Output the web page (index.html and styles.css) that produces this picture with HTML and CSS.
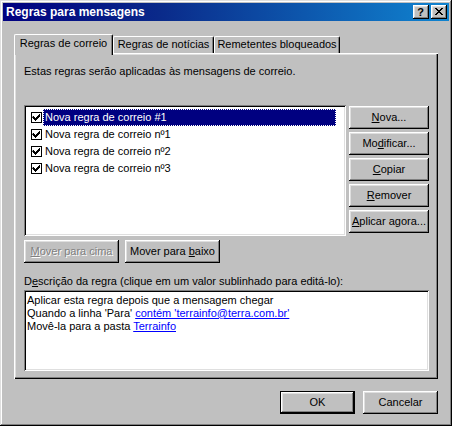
FILE: index.html
```html
<!DOCTYPE html>
<html>
<head>
<meta charset="utf-8">
<link rel="stylesheet" href="styles.css">
</head>
<body>
<div class="window">
  <div class="titlebar">
    <span class="title">Regras para mensagens</span>
    <div class="tbtns">
      <span class="tbtn help">?</span>
      <span class="tbtn close"><svg width="8" height="7" viewBox="0 0 8 7"><path d="M0 0h2v1h1v1h2v-1h1v-1h2v1h-1v1h-1v1h-1v1h1v1h1v1h1v1h-2v-1h-1v-1h-2v1h-1v1h-2v-1h1v-1h1v-1h1v-1h-1v-1h-1v-1h-1z" fill="#000"/></svg></span>
    </div>
  </div>
  <div class="client">
    <div class="tabs">
      <div class="tab active t1">Regras de correio</div>
      <div class="tab t2">Regras de notícias</div>
      <div class="tab t3">Remetentes bloqueados</div>
    </div>
    <div class="panel">
      <p class="intro">Estas regras serão aplicadas às mensagens de correio.</p>
      <div class="rules-row">
        <div class="listbox">
          <div class="item selected"><span class="chk"><svg width="11" height="11" viewBox="0 0 11 11"><rect x="0.5" y="0.5" width="10" height="10" fill="#fff" stroke="#000"/><path d="M2 4h1v1h1v1h1v-1h1v-1h1v-1h1v-1h1v3h-1v1h-1v1h-1v1h-1v1h-1v-1h-1v-1h-1v-1h-1z" fill="#000"/></svg></span><span class="label">Nova regra de correio #1</span></div>
          <div class="item"><span class="chk"><svg width="11" height="11" viewBox="0 0 11 11"><rect x="0.5" y="0.5" width="10" height="10" fill="#fff" stroke="#000"/><path d="M2 4h1v1h1v1h1v-1h1v-1h1v-1h1v-1h1v3h-1v1h-1v1h-1v1h-1v1h-1v-1h-1v-1h-1v-1h-1z" fill="#000"/></svg></span><span class="label">Nova regra de correio nº1</span></div>
          <div class="item"><span class="chk"><svg width="11" height="11" viewBox="0 0 11 11"><rect x="0.5" y="0.5" width="10" height="10" fill="#fff" stroke="#000"/><path d="M2 4h1v1h1v1h1v-1h1v-1h1v-1h1v-1h1v3h-1v1h-1v1h-1v1h-1v1h-1v-1h-1v-1h-1v-1h-1z" fill="#000"/></svg></span><span class="label">Nova regra de correio nº2</span></div>
          <div class="item"><span class="chk"><svg width="11" height="11" viewBox="0 0 11 11"><rect x="0.5" y="0.5" width="10" height="10" fill="#fff" stroke="#000"/><path d="M2 4h1v1h1v1h1v-1h1v-1h1v-1h1v-1h1v3h-1v1h-1v1h-1v1h-1v1h-1v-1h-1v-1h-1v-1h-1z" fill="#000"/></svg></span><span class="label">Nova regra de correio nº3</span></div>
        </div>
        <div class="side-btns">
          <button class="btn"><u>N</u>ova...</button>
          <button class="btn">Mo<u>d</u>ificar...</button>
          <button class="btn"><u>C</u>opiar</button>
          <button class="btn"><u>R</u>emover</button>
          <button class="btn"><u>A</u>plicar agora...</button>
        </div>
      </div>
      <div class="move-row">
        <button class="btn move disabled"><u>M</u>over para cima</button>
        <button class="btn move">Mover para <u>b</u>aixo</button>
      </div>
      <div class="desc-label">D<u>e</u>scrição da regra (clique em um valor sublinhado para editá-lo):</div>
      <div class="desc">
        <div>Aplicar esta regra depois que a mensagem chegar</div>
        <div>Quando a linha 'Para' <a class="link">contém 'terrainfo@terra.com.br'</a></div>
        <div>Movê-la para a pasta <a class="link">Terrainfo</a></div>
      </div>
    </div>
    <div class="footer">
      <button class="btn wide default">OK</button>
      <button class="btn wide">Cancelar</button>
    </div>
  </div>
</div>
</body>
</html>
```

FILE: styles.css
```css
html, body {
  margin: 0;
  padding: 0;
  background: #c0c0c0;
}
body {
  font-family: "Liberation Sans", Arial, sans-serif;
  font-size: 11px;
  line-height: 13px;
  color: #000;
}
.window {
  width: 452px;
  height: 426px;
  box-sizing: border-box;
  padding: 3px;
  background: #c0c0c0;
  box-shadow: inset -1px -1px #000, inset 1px 1px #dfdfdf, inset -2px -2px #808080, inset 2px 2px #fff;
  display: flex;
  flex-direction: column;
}
.titlebar {
  height: 18px;
  flex: none;
  display: flex;
  align-items: center;
  justify-content: space-between;
  padding: 0 2px 0 3px;
  background: linear-gradient(90deg, #000080 0%, #0a2a8a 35%, #1084d0 100%);
}
.title {
  color: #fff;
  font-weight: bold;
  font-size: 12px;
}
.tbtns {
  display: flex;
  gap: 2px;
}
.tbtn {
  width: 16px;
  height: 14px;
  box-sizing: border-box;
  background: #c0c0c0;
  box-shadow: inset -1px -1px #000, inset 1px 1px #fff, inset -2px -2px #808080, inset 2px 2px #dfdfdf;
  display: flex;
  align-items: center;
  justify-content: center;
  font-weight: bold;
  font-size: 11px;
  line-height: 12px;
}
.tbtn.help {
  padding: 0 1px 1px 0;
}
.tbtn.close svg {
  display: block;
  margin: 0 1px 1px 0;
}
.client {
  padding: 13px 11px 0 11px;
}
.tabs {
  display: flex;
  height: 19px;
  align-items: flex-start;
}
.tab {
  box-sizing: border-box;
  height: 17px;
  margin-top: 2px;
  text-align: center;
  line-height: 15px;
  background: #c0c0c0;
  border-top: 1px solid #fff;
  border-left: 1px solid #fff;
  border-right: 1px solid #000;
  border-top-left-radius: 2px;
  border-top-right-radius: 2px;
  box-shadow: inset -1px 0 #808080;
}
.tab.active {
  position: relative;
  z-index: 2;
  height: 21px;
  margin-top: 0;
  line-height: 17px;
}
.t1 { width: 99px; }
.t2 { width: 101px; }
.t3 { width: 126px; }
.panel {
  box-sizing: border-box;
  width: 424px;
  height: 326px;
  padding: 12px 9px 0 10px;
  background: #c0c0c0;
  box-shadow: inset 1px 1px #fff, inset -1px -1px #000, inset -2px -2px #808080, inset 2px 2px #dfdfdf;
}
.intro {
  margin: 0;
  white-space: nowrap;
}
.rules-row {
  margin-top: 27px;
  display: flex;
  gap: 3px;
}
.listbox {
  box-sizing: border-box;
  width: 322px;
  height: 131px;
  padding-top: 4px;
  background: #fff;
  box-shadow: inset 1px 1px #808080, inset -1px -1px #fff, inset 2px 2px #000, inset -2px -2px #dfdfdf;
}
.item {
  height: 17px;
  display: flex;
  align-items: center;
}
.chk {
  margin-left: 7px;
  width: 11px;
  height: 11px;
  display: block;
}
.chk svg {
  display: block;
}
.label {
  margin-left: 1px;
  box-sizing: border-box;
  width: 293px;
  height: 17px;
  padding-left: 2px;
  line-height: 17px;
  white-space: nowrap;
}
.item.selected .label {
  background: #000080;
  color: #fff;
  outline: 1px dotted #fff;
  outline-offset: -1px;
}
.side-btns {
  margin-top: 1px;
  display: flex;
  flex-direction: column;
  gap: 3px;
  width: 80px;
}
.btn {
  font: inherit;
  color: #000;
  margin: 0;
  border: none;
  padding: 0;
  box-sizing: border-box;
  height: 23px;
  width: 80px;
  background: #c0c0c0;
  box-shadow: inset -1px -1px #000, inset 1px 1px #fff, inset -2px -2px #808080, inset 2px 2px #dfdfdf;
  text-align: center;
  white-space: nowrap;
}
.move-row {
  margin-top: 4px;
  display: flex;
  gap: 6px;
}
.btn.move {
  width: 95px;
}
.btn.disabled {
  color: #808080;
  text-shadow: 1px 1px #fff;
}
.desc-label {
  margin-top: 12px;
  white-space: nowrap;
}
.desc {
  margin-top: 2px;
  box-sizing: border-box;
  width: 405px;
  height: 81px;
  padding: 4px 3px;
  background: #fff;
  box-shadow: inset 1px 1px #808080, inset -1px -1px #fff, inset 2px 2px #000, inset -2px -2px #dfdfdf;
  white-space: nowrap;
}
.link {
  color: #0000ff;
  text-decoration: underline;
}
.footer {
  margin-top: 12px;
  display: flex;
  justify-content: flex-end;
  gap: 8px;
}
.btn.wide {
  width: 75px;
}
.btn.default {
  border: 1px solid #000;
}
```
